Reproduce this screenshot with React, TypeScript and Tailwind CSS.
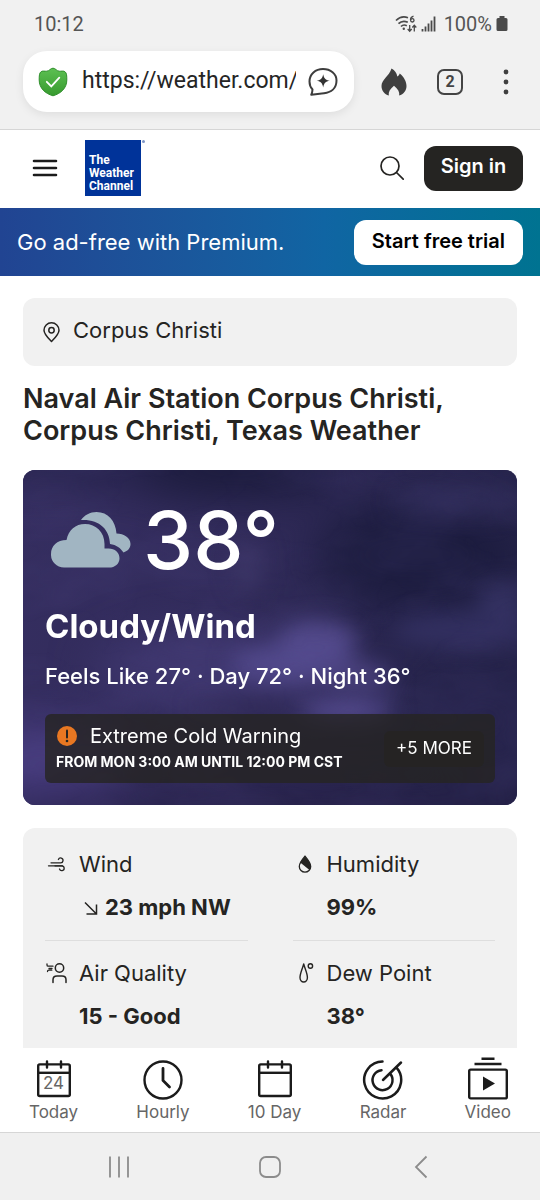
import React from "react";

interface Detail {
  label: string;
  value: string;
  icon: React.ReactNode;
  arrow?: boolean;
}

interface Tab {
  label: string;
  icon: React.ReactNode;
}

/* ---------- icons ---------- */

function WindIcon() {
  return (
    <svg viewBox="0 0 24 24" className="size-6" fill="none" stroke="#252422" strokeWidth="1.3" strokeLinecap="round">
      <path d="M6 10.800h9.500a2.400 2.400 0 1 0-2.100-3.300" />
      <path d="M3.500 13.800h14" />
      <path d="M10 13.800h6.800a2.400 2.400 0 1 1-2.300 3.200" />
    </svg>
  );
}

function HumidityIcon() {
  return (
    <svg viewBox="0 0 24 24" className="size-6">
      <path d="M12 4.200c3 3.600 5.700 7 5.700 10.200a5.700 5.700 0 0 1-11.400 0C6.300 11.200 9 7.800 12 4.200z" fill="none" stroke="#252422" strokeWidth="1.300" />
      <path d="M12 4.200c3 3.600 5.700 7 5.700 10.200 0 1.300-.5 2.500-1.200 3.500L7.200 10.600C8.300 8.500 10.100 6.400 12 4.200z" fill="#252422" />
    </svg>
  );
}

function AirQualityIcon() {
  return (
    <svg viewBox="0 0 24 24" className="size-6" fill="none" stroke="#252422" strokeWidth="1.500" strokeLinecap="round">
      <circle cx="14.500" cy="7" r="4.200" />
      <path d="M8 21.500v-2.700c0-2.300 1.800-3.700 4-3.700h5c2.200 0 4 1.400 4 3.700v2.700" />
      <path d="M2 3v1c0 .8.500 1.200 1.200 1.200H8M4 7.500h3M2.500 10.500c0-.8.500-1.300 1.300-1.300h3" strokeWidth="1.300" />
    </svg>
  );
}

function DewPointIcon() {
  return (
    <svg viewBox="0 0 24 24" className="size-6" fill="none" stroke="#252422" strokeWidth="1.400">
      <path d="M10.700 3c1.200 4.500 3.700 9.200 3.700 13.500a3.700 4.500 0 0 1-7.400 0c0-4.300 2.500-9 3.700-13.500z" strokeLinejoin="round" />
      <circle cx="17.400" cy="5" r="2.200" />
    </svg>
  );
}

function CalendarIcon({ day }: { day?: string }) {
  return (
    <span className="relative block">
      <svg viewBox="0 0 44 44" className="size-11" fill="none" stroke="#1b1b1b" strokeWidth="2.400">
        <rect x="6.200" y="8.400" width="31.600" height="31.600" rx="1.500" />
        <path d="M6 16.800h32" />
        <path d="M15 5.500v6M29 5.500v6" strokeLinecap="round" />
      </svg>
      {day && (
        <span className="absolute inset-x-0 top-[15px] text-center text-[17px] leading-6 text-[#666]">{day}</span>
      )}
    </span>
  );
}

function ClockIcon() {
  return (
    <svg viewBox="0 0 44 44" className="size-11" fill="none" stroke="#1b1b1b" strokeWidth="2.400" strokeLinecap="round">
      <circle cx="22" cy="24" r="18.500" />
      <path d="M22 12.500v12l6.500 6.500" strokeWidth="2.800" />
    </svg>
  );
}

function RadarIcon() {
  return (
    <svg viewBox="0 0 44 44" className="size-11" fill="none" stroke="#1b1b1b" strokeWidth="2.500" strokeLinecap="round">
      <path d="M21.500 5.500a18.500 18.500 0 1 0 14 6.200" />
      <path d="M20.500 14.200a10 10 0 1 0 8.600 3.400" />
      <path d="M22 24 40 6.500" />
    </svg>
  );
}

function VideoIcon() {
  return (
    <svg viewBox="0 0 44 44" className="size-11" fill="none" stroke="#1b1b1b" strokeWidth="2.400">
      <path d="M15.500 2.800h13M8.500 8h27" />
      <rect x="3.200" y="13.600" width="37.600" height="28.800" rx="1.500" />
      <path d="M17 20.500v14l12-7z" fill="#1b1b1b" stroke="none" />
    </svg>
  );
}

function CloudyIcon() {
  return (
    <svg viewBox="0 0 80 56" className="h-14 w-20 shrink-0" fill="#a1b5c2">
      <path d="M13 55.500a13 13 0 0 1-13-13.500c0-8 6-14 15.500-14C17.500 18 24.500 12 34 12c11 0 19.500 8 19.500 20v4.500h4c6.500 0 11 4 11 9.700s-4.500 9.300-10.500 9.300z" />
      <path d="M30 8C33.500 3 39 0 45.500 0 57 0 64.500 8.500 65.500 21.500c7.500 0 14 4.500 14 10.500 0 4-2.500 7-7 8.500-3-4.500-7-7.500-13.500-8.500C58.500 17 48 7 30 8z" />
    </svg>
  );
}

/* ---------- data ---------- */

const details: Detail[] = [
  { label: "Wind", value: "23 mph NW", icon: <WindIcon />, arrow: true },
  { label: "Humidity", value: "99%", icon: <HumidityIcon /> },
  { label: "Air Quality", value: "15 - Good", icon: <AirQualityIcon /> },
  { label: "Dew Point", value: "38°", icon: <DewPointIcon /> },
];

const tabs: Tab[] = [
  { label: "Today", icon: <CalendarIcon day="24" /> },
  { label: "Hourly", icon: <ClockIcon /> },
  { label: "10 Day", icon: <CalendarIcon /> },
  { label: "Radar", icon: <RadarIcon /> },
  { label: "Video", icon: <VideoIcon /> },
];

/* ---------- sections ---------- */

function StatusBar() {
  return (
    <div className="flex h-12 items-center justify-between pr-8 pl-[34px] text-xl text-[#555]">
      <span>10:12</span>
      <div className="flex items-center gap-1">
        {/* wifi 6 */}
        <svg viewBox="0 0 22 18" className="h-[18px] w-[22px]" fill="none" stroke="#4a4a4a" strokeWidth="1.700">
          <path d="M1 5.500C4.500 2 9 1.200 13 2.700M3.500 8.700c2.500-2.500 5.800-3.100 9.300-1.500M6 11.500c1.500-1.500 3.700-1.900 5.800-.8" />
          <circle cx="8.800" cy="13.800" r="1.200" fill="#4a4a4a" stroke="none" />
          <path d="M18.500 1.200c-2.200.6-3 1.900-3 3.800" strokeWidth="1.300" />
          <circle cx="17.300" cy="5.300" r="1.700" strokeWidth="1.300" />
          <path d="M14.700 10v6M12.700 14l2 2.200 2-2.200M19.300 16.500v-6M17.300 12.500l2-2.200 2 2.200" strokeWidth="1.300" />
        </svg>
        <svg viewBox="0 0 15 18" className="h-[18px] w-[15px]" fill="none" stroke="#4a4a4a" strokeWidth="1.800">
          <path d="M1.500 16.500v-2.500M4.500 16.500v-5M7.500 16.500v-8M10.500 16.500v-11M13.500 16.500v-15" />
        </svg>
        <span className="ml-1">100%</span>
        <svg viewBox="0 0 12 18" className="h-[18px] w-3" fill="#4a4a4a">
          <path d="M3.500 1h5v2H10a1.500 1.500 0 0 1 1.500 1.500v10A1.500 1.500 0 0 1 10 16H2a1.500 1.500 0 0 1-1.500-1.500v-10A1.500 1.500 0 0 1 2 3h1.500z" />
        </svg>
      </div>
    </div>
  );
}

function BrowserBar() {
  return (
    <div className="flex items-center pt-[3px] pr-5 pb-[17px] pl-[23px]">
      <div className="flex h-[61px] flex-1 items-center rounded-[24px] bg-white pr-4 pl-[15px] shadow-[0_3px_10px_rgba(0,0,0,0.08)]">
        <svg viewBox="0 0 30 30" className="mr-[14px] size-[30px] shrink-0">
          <defs>
            <linearGradient id="shield" x1="0" y1="0" x2="0" y2="1">
              <stop offset="0" stopColor="#5cc052" />
              <stop offset="1" stopColor="#379a2e" />
            </linearGradient>
          </defs>
          <path
            d="M15 1.200c2.600 0 3.300 2.700 6.200 3 2.200.2 4-.6 5.600.4 2 1.300 2 4.400 2 8.400 0 8-5.800 13.500-13.800 15.800C7 26.500 1.200 21 1.200 13c0-4 0-7.100 2-8.400 1.600-1 3.400-.2 5.600-.4 2.900-.3 3.600-3 6.200-3z"
            fill="url(#shield)"
            stroke="#2f8f2b"
            strokeWidth="1"
          />
          <path d="m8.800 14.800 4.500 4.600 8-8.700" fill="none" stroke="#fff" strokeWidth="1.800" strokeLinecap="round" />
        </svg>
        <input
          aria-label="Address"
          className="w-0 flex-1 bg-transparent text-[23px] text-[#252525] outline-none"
          defaultValue="https://weather.com/weather/today"
        />
        <button aria-label="Ask assistant" className="ml-3 shrink-0">
          <svg viewBox="0 0 30 30" className="size-[30px]">
            <path
              d="M3.200 27.800c.8-1.800 1.300-3.300 1.300-5.300C2.500 20.500 1.500 17.500 1.500 14.500 1.500 7 7.500 2 15 2s13.500 4.600 13.500 11.500c0 8-5.500 12-12.500 12.700-4.500.4-8.500.6-12.800 1.600z"
              fill="none"
              stroke="#3d3d3d"
              strokeWidth="2"
              strokeLinejoin="round"
            />
            <path d="M15.200 7.200c.9 4.300 2.200 5.700 6.600 6.600-4.400.9-5.700 2.300-6.600 6.600-.9-4.300-2.200-5.700-6.600-6.600 4.400-.9 5.700-2.300 6.600-6.600z" fill="#333" />
          </svg>
        </button>
      </div>
      <button aria-label="Clear data" className="ml-[26px]">
        <svg viewBox="0 0 28 30" className="h-[30px] w-7" fill="#3f3f3f">
          <path d="M11.500 1.500c3.500 2 5.200 4.500 5.800 8 1.200-.6 2-1.600 2.400-3 4.300 3.500 6.800 8 6.800 12.500 0 4.500-3 8.300-7.300 9.500.6-3.500-1.200-6.500-5.200-9.800-4 3.300-5.800 6.300-5.200 9.800C4.500 27.300 1.500 23.800 1.500 19c0-6.500 7.500-9.500 10-17.500z" />
        </svg>
      </button>
      <button
        aria-label="Tabs"
        className="ml-[29px] size-[26px] rounded-[7px] border-2 border-[#444] text-center text-base leading-[22px] font-bold text-[#444]"
      >
        2
      </button>
      <button aria-label="More options" className="ml-[29px]">
        <svg viewBox="0 0 28 28" className="size-7" fill="#3f3f3f">
          <circle cx="14" cy="4" r="2.400" />
          <circle cx="14" cy="14" r="2.400" />
          <circle cx="14" cy="24" r="2.400" />
        </svg>
      </button>
    </div>
  );
}

function SiteHeader() {
  return (
    <header className="flex h-[78px] items-center bg-white pr-[17px] pb-[2px] pl-8">
      <button aria-label="Menu">
        <svg viewBox="0 0 26 20" className="h-5 w-[26px]" fill="none" stroke="#1b1b1b" strokeWidth="2.600" strokeLinecap="round">
          <path d="M2 3h22M2 10h22M2 17h22" />
        </svg>
      </button>
      <a href="#" className="relative ml-[27px] flex size-14 items-end bg-[#003399] pb-[3px] pl-1">
        <span className="font-['Roboto'] text-[12px] leading-[13px] font-bold text-white">
          The
          <br />
          Weather
          <br />
          Channel
        </span>
        <span className="absolute top-0 -right-1 size-[3px] rounded-full bg-[#7d95c6]" />
      </a>
      <button aria-label="Search" className="ml-auto">
        <svg viewBox="0 0 24 24" className="size-6" fill="none" stroke="#252422" strokeWidth="1.700" strokeLinecap="round">
          <circle cx="10" cy="10" r="9" />
          <path d="m16.500 16.500 6.700 6.700" />
        </svg>
      </button>
      <button className="ml-5 h-[45px] w-[99px] rounded-xl bg-[#252422] pb-1 text-[20px] font-semibold text-white">
        Sign in
      </button>
    </header>
  );
}

function PremiumBanner() {
  return (
    <div className="flex h-[68px] items-center justify-between bg-linear-to-r from-[#214492] via-[#1065a3] via-60% to-[#007391] px-[17px]">
      <p className="text-[22px] text-white">Go ad-free with Premium.</p>
      <button className="h-[45px] rounded-xl bg-white px-[18px] pb-[2px] text-[20px] font-semibold text-black">
        Start free trial
      </button>
    </div>
  );
}

function NightSky() {
  return (
    <svg className="absolute inset-0 size-full" viewBox="0 0 495 335" preserveAspectRatio="none">
      <defs>
        <linearGradient id="sky" x1="0" y1="0" x2="1" y2="0.200">
          <stop offset="0" stopColor="#352e60" />
          <stop offset="0.450" stopColor="#312b5a" />
          <stop offset="1" stopColor="#252349" />
        </linearGradient>
        <filter id="soft" x="-50%" y="-50%" width="200%" height="200%" colorInterpolationFilters="sRGB">
          <feGaussianBlur stdDeviation="22" />
        </filter>
        <filter id="wisp" x="-50%" y="-50%" width="200%" height="200%" colorInterpolationFilters="sRGB">
          <feGaussianBlur stdDeviation="11" />
        </filter>
        <filter id="haze" x="0" y="0" width="100%" height="100%" colorInterpolationFilters="sRGB">
          <feTurbulence type="fractalNoise" baseFrequency="0.009 0.016" numOctaves="4" seed="11" />
          <feColorMatrix values="0 0 0 0 0.36  0 0 0 0 0.32  0 0 0 0 0.58  1.6 0 0 0 -0.62" />
        </filter>
      </defs>
      <rect width="495" height="335" fill="url(#sky)" />
      <g filter="url(#soft)">
        <ellipse cx="210" cy="0" rx="110" ry="28" fill="#1a1a3a" />
        <ellipse cx="30" cy="-5" rx="90" ry="18" fill="#211f45" />
        <ellipse cx="395" cy="85" rx="100" ry="52" fill="#1c1c3e" />
        <ellipse cx="20" cy="290" rx="80" ry="40" fill="#453a7b" />
        <ellipse cx="190" cy="200" rx="120" ry="40" fill="#3f376f" />
        <ellipse cx="260" cy="340" rx="280" ry="16" fill="#262047" />
        <ellipse cx="460" cy="250" rx="60" ry="50" fill="#28254e" />
      </g>
      <g filter="url(#wisp)">
        <ellipse cx="295" cy="170" rx="40" ry="20" fill="#52498a" />
        <ellipse cx="270" cy="194" rx="64" ry="18" fill="#544b8f" opacity="0.900" />
        <ellipse cx="335" cy="205" rx="36" ry="14" fill="#4b427f" opacity="0.900" />
        <ellipse cx="325" cy="241" rx="48" ry="10" fill="#6357a3" opacity="0.900" />
        <ellipse cx="440" cy="160" rx="70" ry="18" fill="#37346a" opacity="0.700" />
        <ellipse cx="480" cy="130" rx="26" ry="14" fill="#3d3a70" opacity="0.700" />
        <ellipse cx="220" cy="238" rx="50" ry="8" fill="#2c2650" opacity="0.700" />
        <ellipse cx="440" cy="30" rx="70" ry="12" fill="#33305f" opacity="0.700" />
        <ellipse cx="225" cy="95" rx="16" ry="30" fill="#3f3869" opacity="0.600" />
      </g>
      <rect width="495" height="335" filter="url(#haze)" opacity="0.200" />
    </svg>
  );
}

function CurrentConditions() {
  return (
    <section className="relative mt-[23px] overflow-hidden rounded-xl bg-[#322d5b] p-[22px] text-white">
      <NightSky />
      <div className="relative">
        <div className="flex items-center gap-3 pl-[6px]">
          <CloudyIcon />
          <span className="text-[80px] leading-[96px] font-medium">38°</span>
        </div>
        <h2 className="mt-4 text-[33px] leading-[44px] font-bold">Cloudy/Wind</h2>
        <p className="mt-3 text-[22px] leading-8 font-medium">
          Feels Like 27° · Day 72° · Night 36°
        </p>
        <div className="mt-[22px] flex h-[69px] items-center justify-between rounded-md bg-[#252422]/80 px-[11px]">
          <div className="pb-[2px]">
            <div className="flex items-center gap-3">
              <svg viewBox="0 0 22 22" className="size-[22px]">
                <circle cx="11" cy="11" r="10" fill="#e87722" />
                <path d="M11 5.500v7" stroke="#252422" strokeWidth="2" strokeLinecap="round" />
                <circle cx="11" cy="16" r="1.300" fill="#252422" />
              </svg>
              <span className="text-[20px] leading-7">Extreme Cold Warning</span>
            </div>
            <p className="text-[14px] leading-6 font-bold uppercase">From Mon 3:00 AM until 12:00 PM CST</p>
          </div>
          <button className="h-9 rounded-md bg-[#252422]/80 px-3 text-[17px]">+5 MORE</button>
        </div>
      </div>
    </section>
  );
}

function DetailCell({ label, value, icon, arrow }: Detail) {
  return (
    <div className="border-b border-[#dedede] pt-[18px] pb-[19px]">
      <div className="flex items-center gap-[10px]">
        {icon}
        <span className="text-[22px] leading-7">{label}</span>
      </div>
      <div className="mt-[15px] flex items-center gap-1 pl-[34px]">
        {arrow && (
          <svg viewBox="0 0 22 22" className="size-[22px]" fill="none" stroke="#252422" strokeWidth="1.500">
            <path d="m6 6.500 11 11M17.500 8.500V18H7.500" />
          </svg>
        )}
        <span className="text-[22px] leading-7 font-bold">{value}</span>
      </div>
    </div>
  );
}

function BottomTabs() {
  return (
    <nav className="flex shrink-0 justify-between bg-white px-[29px] py-2">
      {tabs.map((tab) => (
        <a key={tab.label} href="#" className="flex flex-col items-center text-[17px] leading-6 text-[#666]">
          {tab.icon}
          {tab.label}
        </a>
      ))}
    </nav>
  );
}

function SystemNav() {
  return (
    <div className="grid h-[68px] shrink-0 grid-cols-3 border-t border-[#d6d6d6] bg-[#f0f0f0] px-11">
      <button aria-label="Recent apps" className="flex items-center justify-center">
        <svg viewBox="0 0 24 24" className="size-6" fill="none" stroke="#8c8c8c" strokeWidth="1.800">
          <path d="M3 1.500v21M12 1.500v21M21 1.500v21" />
        </svg>
      </button>
      <button aria-label="Home" className="flex items-center justify-center">
        <svg viewBox="0 0 24 24" className="size-6" fill="none" stroke="#8c8c8c" strokeWidth="1.800">
          <rect x="2" y="2" width="20" height="20" rx="6" />
        </svg>
      </button>
      <button aria-label="Back" className="flex items-center justify-center">
        <svg viewBox="0 0 24 24" className="size-6" fill="none" stroke="#8c8c8c" strokeWidth="1.800">
          <path d="M17.500 1.500 7 12l10.500 10.500" />
        </svg>
      </button>
    </div>
  );
}

export default function App() {
  return (
    <div className="flex h-screen flex-col bg-white font-['Inter',sans-serif] text-[#252422]">
      <div className="shrink-0 border-b border-[#d6d6d6] bg-[#f1f1f1] font-['Roboto',sans-serif]">
        <StatusBar />
        <BrowserBar />
      </div>

      <div className="min-h-0 flex-1 overflow-hidden">
        <SiteHeader />
        <PremiumBanner />

        <main className="px-[23px] pt-[22px]">
          {/* Location search */}
          <label className="flex h-[68px] items-center gap-3 rounded-xl bg-[#f1f1f1] px-[18px]">
            <svg viewBox="0 0 20 24" className="h-6 w-5 shrink-0" fill="none" stroke="#252422" strokeWidth="1.500">
              <path d="M10.500 21.500C7 18 3 14.300 3 10.300a7.500 7.500 0 0 1 15 0c0 4-4 7.700-7.500 11.200z" strokeLinejoin="round" />
              <circle cx="10.500" cy="10.300" r="2.700" />
            </svg>
            <input
              aria-label="Search city or zip code"
              className="w-0 flex-1 bg-transparent pb-1 text-[22px] outline-none"
              defaultValue="Corpus Christi"
            />
          </label>

          <h1 className="mt-[17px] text-[27px] leading-8 font-semibold">
            Naval Air Station Corpus Christi, Corpus Christi, Texas Weather
          </h1>

          <CurrentConditions />

          <section className="mt-[23px] grid grid-cols-2 gap-x-[45px] rounded-xl bg-[#f1f1f1] px-[22px] pt-1 pb-6">
            {details.map((d) => (
              <DetailCell key={d.label} {...d} />
            ))}
          </section>
        </main>
      </div>

      <BottomTabs />
      <SystemNav />
    </div>
  );
}
